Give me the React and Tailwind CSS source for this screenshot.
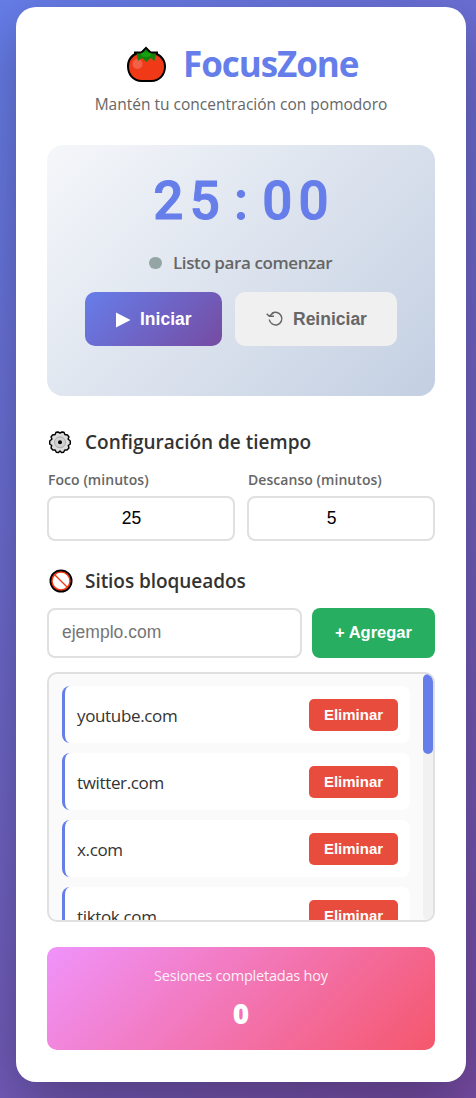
const sites = ["youtube.com", "twitter.com", "x.com", "tiktok.com"];

function Tomato() {
  return (
    <svg className="h-[38px] w-[42px] shrink-0" viewBox="0 0 42 38">
      <path
        d="M8 5.5H15L20 0.5L25 5.5H32V7.5C37 10 40 14.5 40 20.5C40 29 34 36 25.5 36H15.5C7 36 1 29 1 20.5C1 14.5 3.5 10 8 7.5Z"
        fill="#000"
      />
      <path
        d="M20 7C9 7 3 12.5 3 20.5C3 28.5 8.5 34 15.5 34H25.5C32.500 34 38 28.500 38 20.500C38 12.500 31 7 20 7Z"
        fill="#f03a17"
      />
      <circle cx="11.500" cy="18" r="5" fill="#f3604a" />
      <path d="M10.500 7.500H16L20 3L24 7.500H30L28.500 15L24.500 12L20.500 16L16 12L12 15Z" fill="#13800e" />
      <ellipse cx="20" cy="8.500" rx="5" ry="2.500" fill="#16a10f" />
    </svg>
  );
}

function Gear() {
  return (
    <svg className="h-[24px] w-[24px] shrink-0" viewBox="0 0 24 24">
      <path
        d="M10 2L12 3L14 2L16 2.300L16.800 4.500L19.500 5L21 7L20 9L22.300 11V14L20.300 15.500L21 18L19 20L16.800 20L15.500 22.300L13.500 22.500L12 21L10.500 22.500L8.300 22.200L7.200 20L4.800 20L3 18L3.700 15.500L1.700 14V11L4 9L3 7L4.500 5L7.200 4.500L8 2.300Z"
        fill="#dcdcdc"
        stroke="#000"
        strokeWidth="1.400"
        strokeLinejoin="round"
      />
      <circle cx="12" cy="12.300" r="5.500" fill="#d0d0d0" stroke="#a0a0a0" strokeWidth="0.800" />
      <circle cx="12" cy="12.300" r="2" fill="#000" />
    </svg>
  );
}

function Blocked() {
  return (
    <svg className="h-[24px] w-[24px] shrink-0" viewBox="0 0 24 24">
      <circle cx="12" cy="12" r="10.300" fill="#fff" stroke="#000" strokeWidth="2.400" />
      <circle cx="12" cy="12" r="9" fill="#fff" stroke="#f03a17" strokeWidth="1.500" />
      <path d="M5.700 5.700L18.300 18.300" stroke="#f03a17" strokeWidth="1.300" />
    </svg>
  );
}

function Restart() {
  return (
    <svg className="h-[16px] w-[18px] shrink-0" viewBox="0 0 18 16" fill="none" stroke="#666" strokeWidth="1.500">
      <path d="M5.800 2.600A6.300 6.300 0 1 1 3.300 8.500" />
      <path d="M0.700 2.800L3.300 5.300L8 5.300M3.300 5.300L7.500 1.600" />
    </svg>
  );
}

function SiteRow({ name }) {
  return (
    <li className="flex h-[57px] shrink-0 items-center justify-between rounded-lg border-l-[3px] border-[#667eea] bg-white pr-3 pl-3">
      <span className="pt-[2px] text-[17px] leading-6 tracking-[-0.35px] text-[#333]">{name}</span>
      <button className="h-8 w-[89px] rounded-[5px] bg-[#e74c3c] pt-[2px] font-['Liberation_Sans',Arial,sans-serif] text-[15px] font-bold text-white">
        Eliminar
      </button>
    </li>
  );
}

function TimeField({ label, value }) {
  return (
    <label className="flex flex-1 flex-col">
      <span className="h-[27px] pl-[1px] text-[14px] leading-[22px] font-semibold tracking-[0.05px] whitespace-nowrap text-[#666]">{label}</span>
      <input
        readOnly
        value={value}
        className="h-[45px] w-full rounded-lg border-2 border-[#e0e0e0] bg-white pr-[19px] text-center font-['Liberation_Sans',Arial,sans-serif] text-[17.500px] text-black outline-none"
      />
    </label>
  );
}

export default function App() {
  return (
    <div className="h-[1098px] w-[476px] overflow-hidden bg-[linear-gradient(135deg,#667eea_0%,#764ba2_100%)] pt-[7px] pl-4 font-['Open_Sans','Noto_Sans',sans-serif]">
      <main className="flex h-[1075px] w-[450px] flex-col rounded-[20px] bg-white px-[31px] shadow-[0_20px_60px_rgba(0,0,0,0.3)]">
        <header className="h-[138px] pt-[32px]">
          <h1 className="flex h-[50px] items-center pl-[79px] text-[35px] font-bold whitespace-nowrap text-[#667eea]">
            <span className="pt-[2px]"><Tomato /></span>
            <span className="ml-[15px] tracking-[-1.050px]">FocusZone</span>
          </h1>
          <p className="mt-[3px] text-center text-[15.500px] leading-6 whitespace-nowrap text-[#666]">Mantén tu concentración con pomodoro</p>
        </header>

        <section className="h-[251px] rounded-2xl bg-[linear-gradient(135deg,#f5f7fa_0%,#c3cfe2_100%)] pt-[22px]">
          <div className="flex h-[70px] items-center justify-center font-['Roboto',sans-serif] text-[53px] font-medium text-[#667eea] [-webkit-text-stroke:1px_#667eea]">
            {[..."25:00"].map((char, i) => (
              <span key={i} className="w-[36.300px] text-center">{char}</span>
            ))}
          </div>
          <div className="mt-[12px] flex h-7 items-center pl-[102px]">
            <span className="h-3 w-[13px] rounded-full bg-[#95a5a6]" />
            <span className="ml-[11px] text-[17px] font-semibold tracking-[-0.4px] whitespace-nowrap text-[#666]">Listo para comenzar</span>
          </div>
          <div className="mt-[15px] flex justify-center gap-[13px] font-['Liberation_Sans',Arial,sans-serif] text-[17.500px] font-bold">
            <button className="flex h-[54px] w-[137px] items-center rounded-[10px] bg-[linear-gradient(135deg,#667eea_0%,#764ba2_100%)] pl-[31px] text-white">
              <svg className="h-4 w-[15px] shrink-0 translate-y-px" viewBox="0 0 15 16"><path d="M0 0.500L14.500 8L0 15.500Z" fill="#fff" /></svg>
              <span className="ml-[9px]">Iniciar</span>
            </button>
            <button className="flex h-[54px] w-[162px] items-center rounded-[10px] bg-[#f0f0f0] pl-[31px] text-[#666]">
              <Restart />
              <span className="ml-[9px]">Reiniciar</span>
            </button>
          </div>
        </section>

        <section className="pt-[31px]">
          <h2 className="flex h-[30px] items-center pl-[1px] text-[19px] font-semibold whitespace-nowrap text-[#333]">
            <Gear />
            <span className="ml-[13px]">Configuración de tiempo</span>
          </h2>
          <div className="mt-[12px] flex gap-3">
            <TimeField label="Foco (minutos)" value="25" />
            <TimeField label="Descanso (minutos)" value="5" />
          </div>
        </section>

        <section className="pt-[25px]">
          <h2 className="flex h-[30px] items-center pl-[2px] text-[19px] font-semibold whitespace-nowrap text-[#333]">
            <Blocked />
            <span className="ml-[12px] tracking-[-0.050px]">Sitios bloqueados</span>
          </h2>
          <div className="mt-[12px] flex gap-[10px]">
            <input
              placeholder="ejemplo.com"
              className="h-[50px] w-[255px] rounded-lg border-2 border-[#e0e0e0] bg-white pb-[2px] pl-[13px] font-['Liberation_Sans',Arial,sans-serif] text-[17.500px] outline-none placeholder:text-[#757575]"
            />
            <button className="h-[50px] w-[123px] rounded-lg bg-[#27ae60] pb-[2px] font-['Liberation_Sans',Arial,sans-serif] text-[16.500px] font-bold text-white">+ Agregar</button>
          </div>
          <div className="mt-[14px] flex h-[250px] overflow-hidden rounded-[10px] border-2 border-[#e0e0e0] bg-[#fafafa]">
            <ul className="flex flex-1 flex-col gap-[10px] overflow-hidden pt-3 pr-[13px] pl-[13px]">
              {sites.map((name) => <SiteRow key={name} name={name} />)}
            </ul>
            <div className="w-[10px] rounded-[10px] bg-[#f1f1f1]">
              <div className="h-20 rounded-[10px] bg-[#667eea]" />
            </div>
          </div>
        </section>

        <section className="mt-[25px] h-[103px] rounded-[10px] bg-[linear-gradient(135deg,#f093fb_0%,#f5576c_100%)] pt-[17px] text-center text-white">
          <p className="text-[14.500px] leading-6 tracking-[-0.2px] opacity-90">Sesiones completadas hoy</p>
          <p className="mt-[5px] text-[28px] leading-10 font-extrabold">0</p>
        </section>
      </main>
    </div>
  );
}
